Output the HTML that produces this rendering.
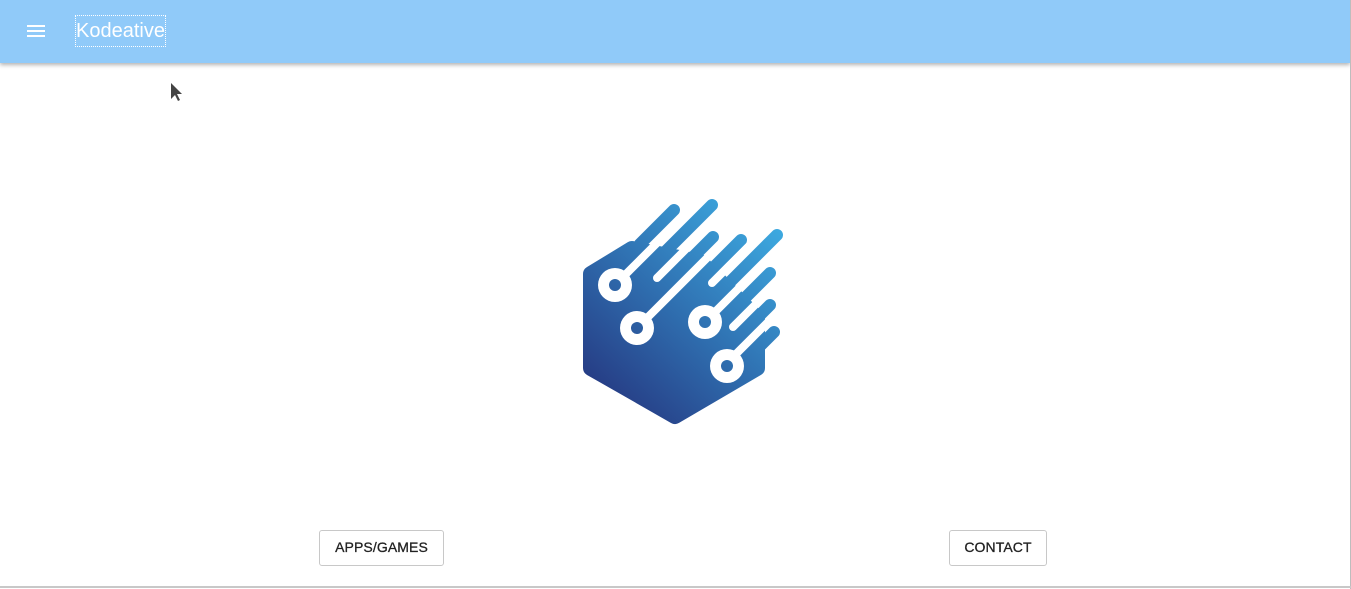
<!DOCTYPE html>
<html><head><meta charset="utf-8"><style>
html,body{margin:0;padding:0;width:1351px;height:589px;overflow:hidden;background:#fff;font-family:"Liberation Sans",sans-serif;}
.bar{position:absolute;left:0;top:0;width:1350px;height:63px;background:#90caf9;box-shadow:0 2px 4px rgba(0,0,0,.3);}
.title{position:absolute;left:75px;top:15px;width:89px;height:30px;border:1px dotted #fff;color:#fff;font-size:20px;line-height:31px;text-align:center;}
.menu{position:absolute;left:27px;top:25px;width:18px;height:2px;background:#fff;box-shadow:0 5px 0 #fff,0 10px 0 #fff;}
.btn{position:absolute;top:530px;height:34px;border:1px solid #c8c8c8;border-radius:3px;font-size:14px;line-height:33px;text-align:center;color:#222;letter-spacing:.1px;-webkit-text-stroke:0.3px #222;}
.rb{position:absolute;left:1350px;top:0;width:1px;height:589px;background:#bdbdbd;}
.bb{position:absolute;left:0;top:586px;width:1351px;height:2px;background:#c8c8c8;}
</style></head><body>
<div class="bar"><div class="menu"></div><div class="title">Kodeative</div></div>
<svg width="1351" height="589" style="position:absolute;left:0;top:0">
<defs><linearGradient id="g" gradientUnits="userSpaceOnUse" x1="590" y1="420" x2="780" y2="215"><stop offset="0" stop-color="#24307a"/><stop offset="0.5" stop-color="#2f6fb0"/><stop offset="1" stop-color="#3eaee4"/></linearGradient></defs>
<path d="M171,83 L171,99 L175,95 L178,101 L180,100 L177,94 L182,94 Z" fill="#444"/>
<g fill="url(#g)" stroke="url(#g)">
<polygon points="591,274 632,249 700,262 757,318 757,368 675,416 591,368" stroke-width="16" stroke-linejoin="round"/>
<g stroke-width="12" stroke-linecap="round" fill="none">
<line x1="640" y1="244" x2="674" y2="210"/>
<line x1="640" y1="277" x2="712" y2="205"/>
<line x1="660" y1="290" x2="713" y2="237"/>
<line x1="680" y1="301" x2="741" y2="240"/>
<line x1="700" y1="312" x2="777" y2="235"/>
<line x1="720" y1="323" x2="770" y2="273"/>
<line x1="740" y1="335" x2="770" y2="305"/>
<line x1="750" y1="356" x2="774" y2="332"/>
</g></g>
<g stroke="#fff" stroke-width="8" stroke-linecap="round">
<line x1="615" y1="285" x2="690" y2="210"/>
<line x1="637" y1="328" x2="740" y2="225"/>
<line x1="705" y1="322" x2="790" y2="237"/>
<line x1="725" y1="365" x2="790" y2="300"/>
<line x1="657" y1="278" x2="700" y2="235"/>
<line x1="712" y1="283" x2="760" y2="235"/>
<line x1="733" y1="327" x2="785" y2="275"/>
</g>
<g fill="#fff"><circle cx="615" cy="285" r="17"/><circle cx="637" cy="328" r="17"/><circle cx="705" cy="322" r="17"/><circle cx="727" cy="366" r="17"/></g>
<g fill="url(#g)"><circle cx="615" cy="285" r="6"/><circle cx="637" cy="328" r="6"/><circle cx="705" cy="322" r="6"/><circle cx="727" cy="366" r="6"/></g>
</svg>
<div class="btn" style="left:319px;width:123px">APPS/GAMES</div>
<div class="btn" style="left:949px;width:96px">CONTACT</div>
<div class="rb"></div><div class="bb"></div>
</body></html>
